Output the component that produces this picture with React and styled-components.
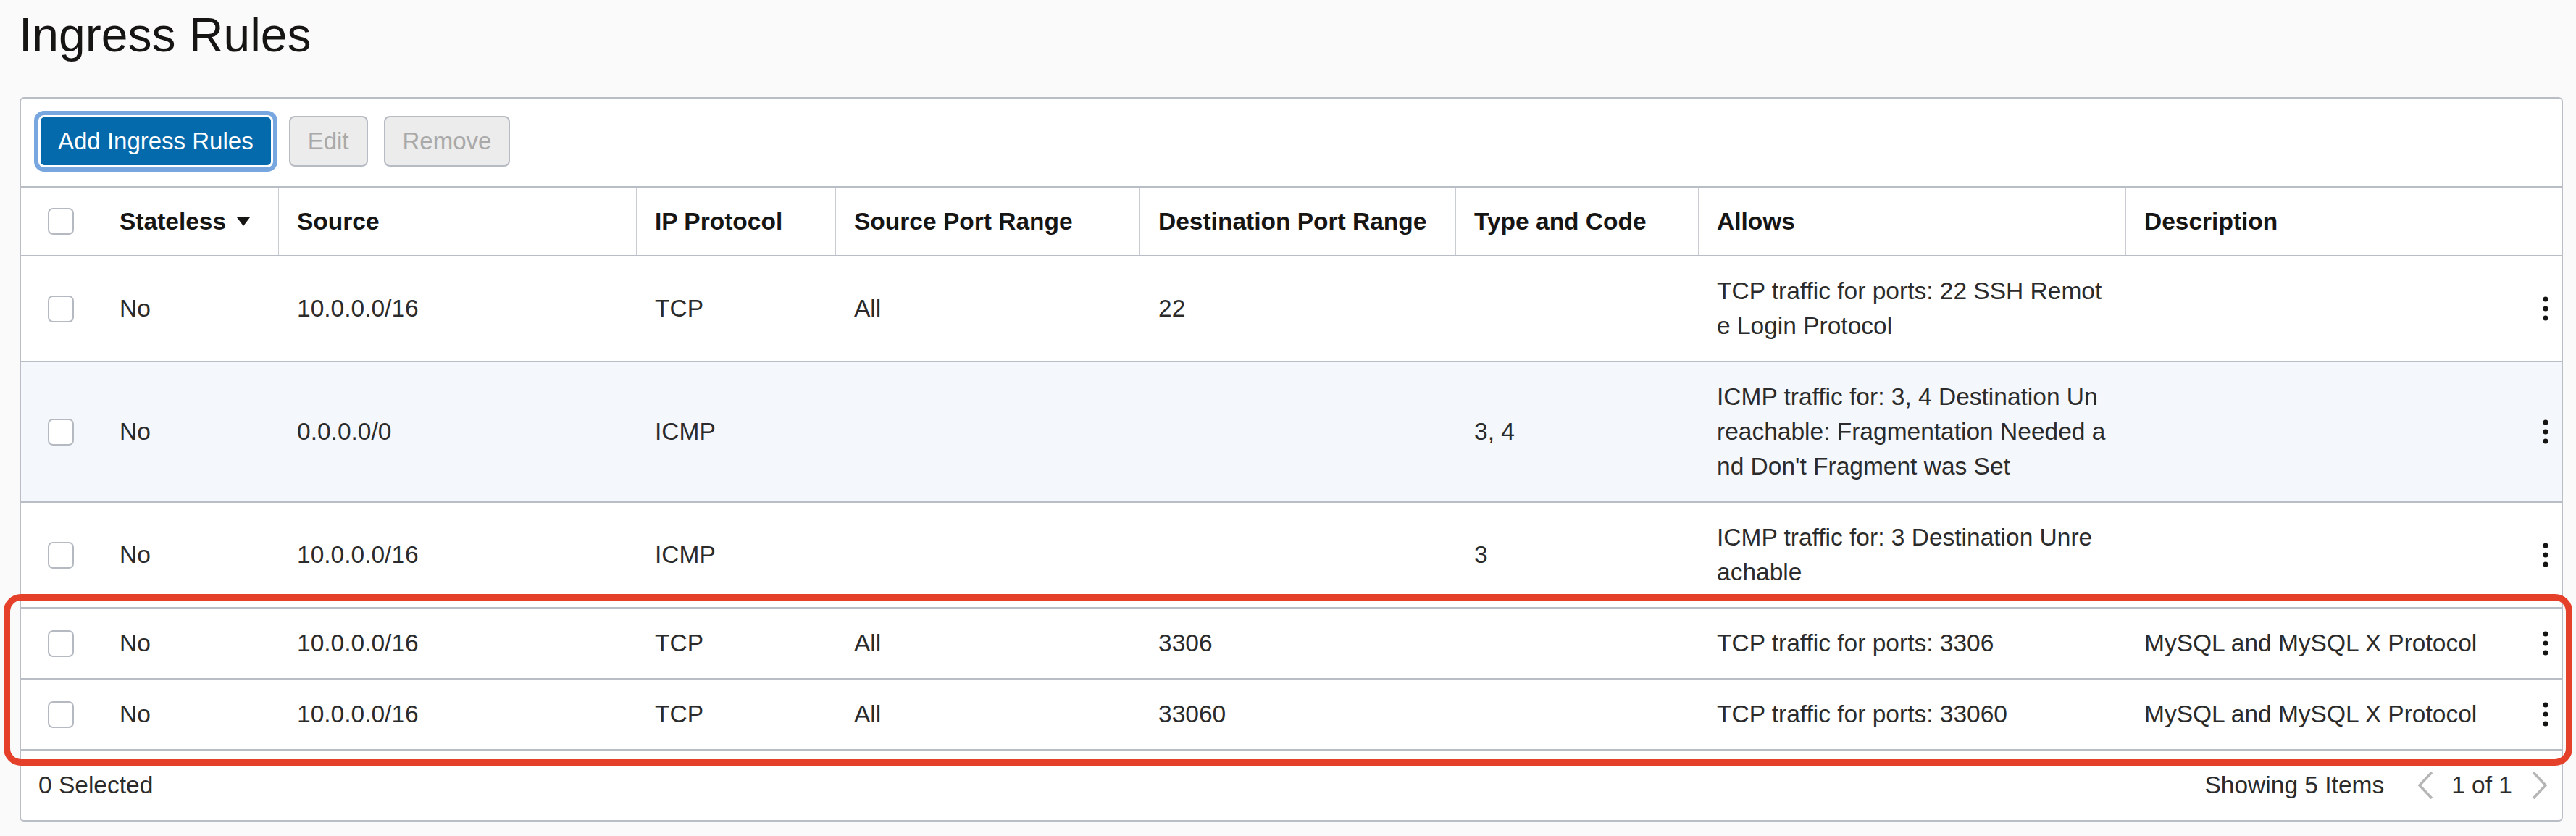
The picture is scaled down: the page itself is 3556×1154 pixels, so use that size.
import React from 'react'
import styled, { createGlobalStyle } from 'styled-components'

const GlobalStyle = createGlobalStyle`
  html, body {
    margin: 0;
    background: #fafafa;
    font-family: "Liberation Sans", Arial, Helvetica, sans-serif;
    color: #2b2b2b;
  }
`

const COLUMNS = '110px 245px 494px 275px 420px 436px 335px 590px 1fr'

const Page = styled.div`
  padding: 10px 18px 0 27px;
`

const Title = styled.h1`
  margin: 0 0 48px -1px;
  font-size: 66px;
  line-height: 76px;
  font-weight: 400;
  color: #161513;
`

const Panel = styled.div`
  background: #fff;
  border: 2px solid #b9bdc5;
  border-radius: 6px;
`

const Toolbar = styled.div`
  display: flex;
  align-items: center;
  gap: 22px;
  padding: 23px 24px 26px;
  border-bottom: 2px solid #b9bdc5;
`

const Button = styled.button`
  height: ${p => (p.$primary ? '72px' : '70px')};
  padding: 0 ${p => (p.$primary ? '24px' : '24px')};
  font-family: inherit;
  font-size: 33px;
  border-radius: 8px;
  border: ${p => (p.$primary ? '3px solid #fff' : '2px solid #b7bcc4')};
  background: ${p => (p.$primary ? '#056aac' : '#ececec')};
  color: ${p => (p.$primary ? '#fff' : '#a9a9a9')};
  box-shadow: ${p => (p.$primary ? '0 0 0 6px #78a6df' : 'none')};
`

const Row = styled.div`
  display: grid;
  grid-template-columns: ${COLUMNS};
  border-bottom: 2px solid #b9bdc5;
  background: ${p => (p.$hover ? '#f4f7fb' : '#fff')};
`

const HeadCell = styled.div`
  display: flex;
  align-items: center;
  gap: 15px;
  height: 93px;
  padding: 0 25px;
  border-left: ${p => (p.$first ? 'none' : '1px solid #c9cdd3')};
  justify-content: ${p => (p.$first ? 'center' : 'flex-start')};
  font-size: 33.5px;
  font-weight: 700;
  color: #161513;
  white-space: nowrap;
`

const Cell = styled.div`
  display: flex;
  align-items: center;
  justify-content: ${p => (p.$center ? 'center' : 'flex-start')};
  padding: 24px 26px;
  font-size: 33.5px;
  line-height: 48px;
  white-space: nowrap;
`

const LastCell = styled(Cell)`
  justify-content: space-between;
  padding-right: 18px;
`

const Lines = styled.div`
  display: flex;
  flex-direction: column;
`

const Checkbox = styled.span`
  display: block;
  width: 32px;
  height: 33px;
  border: 2px solid #b5bac2;
  border-radius: 7px;
  background: #fff;
`

const Highlight = styled.div`
  position: relative;

  &::after {
    content: '';
    position: absolute;
    top: -20px;
    bottom: -21px;
    left: -24px;
    right: -15px;
    border: 9px solid #e5402a;
    border-radius: 24px;
    pointer-events: none;
  }
`

const Footer = styled.div`
  display: flex;
  align-items: center;
  justify-content: space-between;
  height: 96px;
  padding: 0 19px 0 24px;
  font-size: 33.5px;
`

const Pager = styled.div`
  display: flex;
  align-items: center;
`

const PageInfo = styled.span`
  margin: 0 27px 0 25px;
`

const Chevron = styled.svg`
  display: block;
  margin-left: ${p => p.$ml || 0}px;
`

const SortArrow = () => (
  <svg width="18" height="12" viewBox="0 0 18 12">
    <polygon points="0,0 18,0 9,12" fill="#161513" />
  </svg>
)

const Kebab = () => (
  <svg width="8" height="34" viewBox="0 0 8 34">
    <circle cx="4" cy="4" r="3.6" fill="#161513" />
    <circle cx="4" cy="17" r="3.6" fill="#161513" />
    <circle cx="4" cy="30" r="3.6" fill="#161513" />
  </svg>
)

const headers = ['Source', 'IP Protocol', 'Source Port Range', 'Destination Port Range', 'Type and Code', 'Allows', 'Description']

const rules = [
  { source: '10.0.0.0/16', proto: 'TCP', srcPort: 'All', dstPort: '22', type: '', allows: ['TCP traffic for ports: 22 SSH Remot', 'e Login Protocol'], desc: '' },
  { source: '0.0.0.0/0', proto: 'ICMP', srcPort: '', dstPort: '', type: '3, 4', allows: ['ICMP traffic for: 3, 4 Destination Un', 'reachable: Fragmentation Needed a', "nd Don't Fragment was Set"], desc: '', hover: true },
  { source: '10.0.0.0/16', proto: 'ICMP', srcPort: '', dstPort: '', type: '3', allows: ['ICMP traffic for: 3 Destination Unre', 'achable'], desc: '' },
  { source: '10.0.0.0/16', proto: 'TCP', srcPort: 'All', dstPort: '3306', type: '', allows: ['TCP traffic for ports: 3306'], desc: 'MySQL and MySQL X Protocol', marked: true },
  { source: '10.0.0.0/16', proto: 'TCP', srcPort: 'All', dstPort: '33060', type: '', allows: ['TCP traffic for ports: 33060'], desc: 'MySQL and MySQL X Protocol', marked: true }
]

const RuleRow = ({ rule }) => (
  <Row $hover={rule.hover}>
    <Cell $center><Checkbox /></Cell>
    <Cell>No</Cell>
    <Cell>{rule.source}</Cell>
    <Cell>{rule.proto}</Cell>
    <Cell>{rule.srcPort}</Cell>
    <Cell>{rule.dstPort}</Cell>
    <Cell>{rule.type}</Cell>
    <Cell>
      <Lines>
        {rule.allows.map(line => <span key={line}>{line}</span>)}
      </Lines>
    </Cell>
    <LastCell>
      <span>{rule.desc}</span>
      <Kebab />
    </LastCell>
  </Row>
)

export default function App () {
  const plain = rules.filter(r => !r.marked)
  const marked = rules.filter(r => r.marked)

  return (
    <Page>
      <GlobalStyle />
      <Title>Ingress Rules</Title>

      <Panel>
        <Toolbar>
          <Button $primary>Add Ingress Rules</Button>
          <Button disabled>Edit</Button>
          <Button disabled>Remove</Button>
        </Toolbar>

        <Row>
          <HeadCell $first><Checkbox /></HeadCell>
          <HeadCell>Stateless <SortArrow /></HeadCell>
          {headers.map(h => <HeadCell key={h}>{h}</HeadCell>)}
        </Row>

        {plain.map((r, i) => <RuleRow key={i} rule={r} />)}

        <Highlight>
          {marked.map((r, i) => <RuleRow key={i} rule={r} />)}
        </Highlight>

        <Footer>
          <span>0 Selected</span>
          <Pager>
            <span>Showing 5 Items</span>
            <Chevron $ml={46} width="22" height="38" viewBox="0 0 22 38">
              <polyline points="20,1 3,19 20,37" fill="none" stroke="#b5b5b5" strokeWidth="3.5" />
            </Chevron>
            <PageInfo>1 of 1</PageInfo>
            <Chevron width="22" height="38" viewBox="0 0 22 38">
              <polyline points="2,1 19,19 2,37" fill="none" stroke="#b5b5b5" strokeWidth="3.5" />
            </Chevron>
          </Pager>
        </Footer>
      </Panel>
    </Page>
  )
}
